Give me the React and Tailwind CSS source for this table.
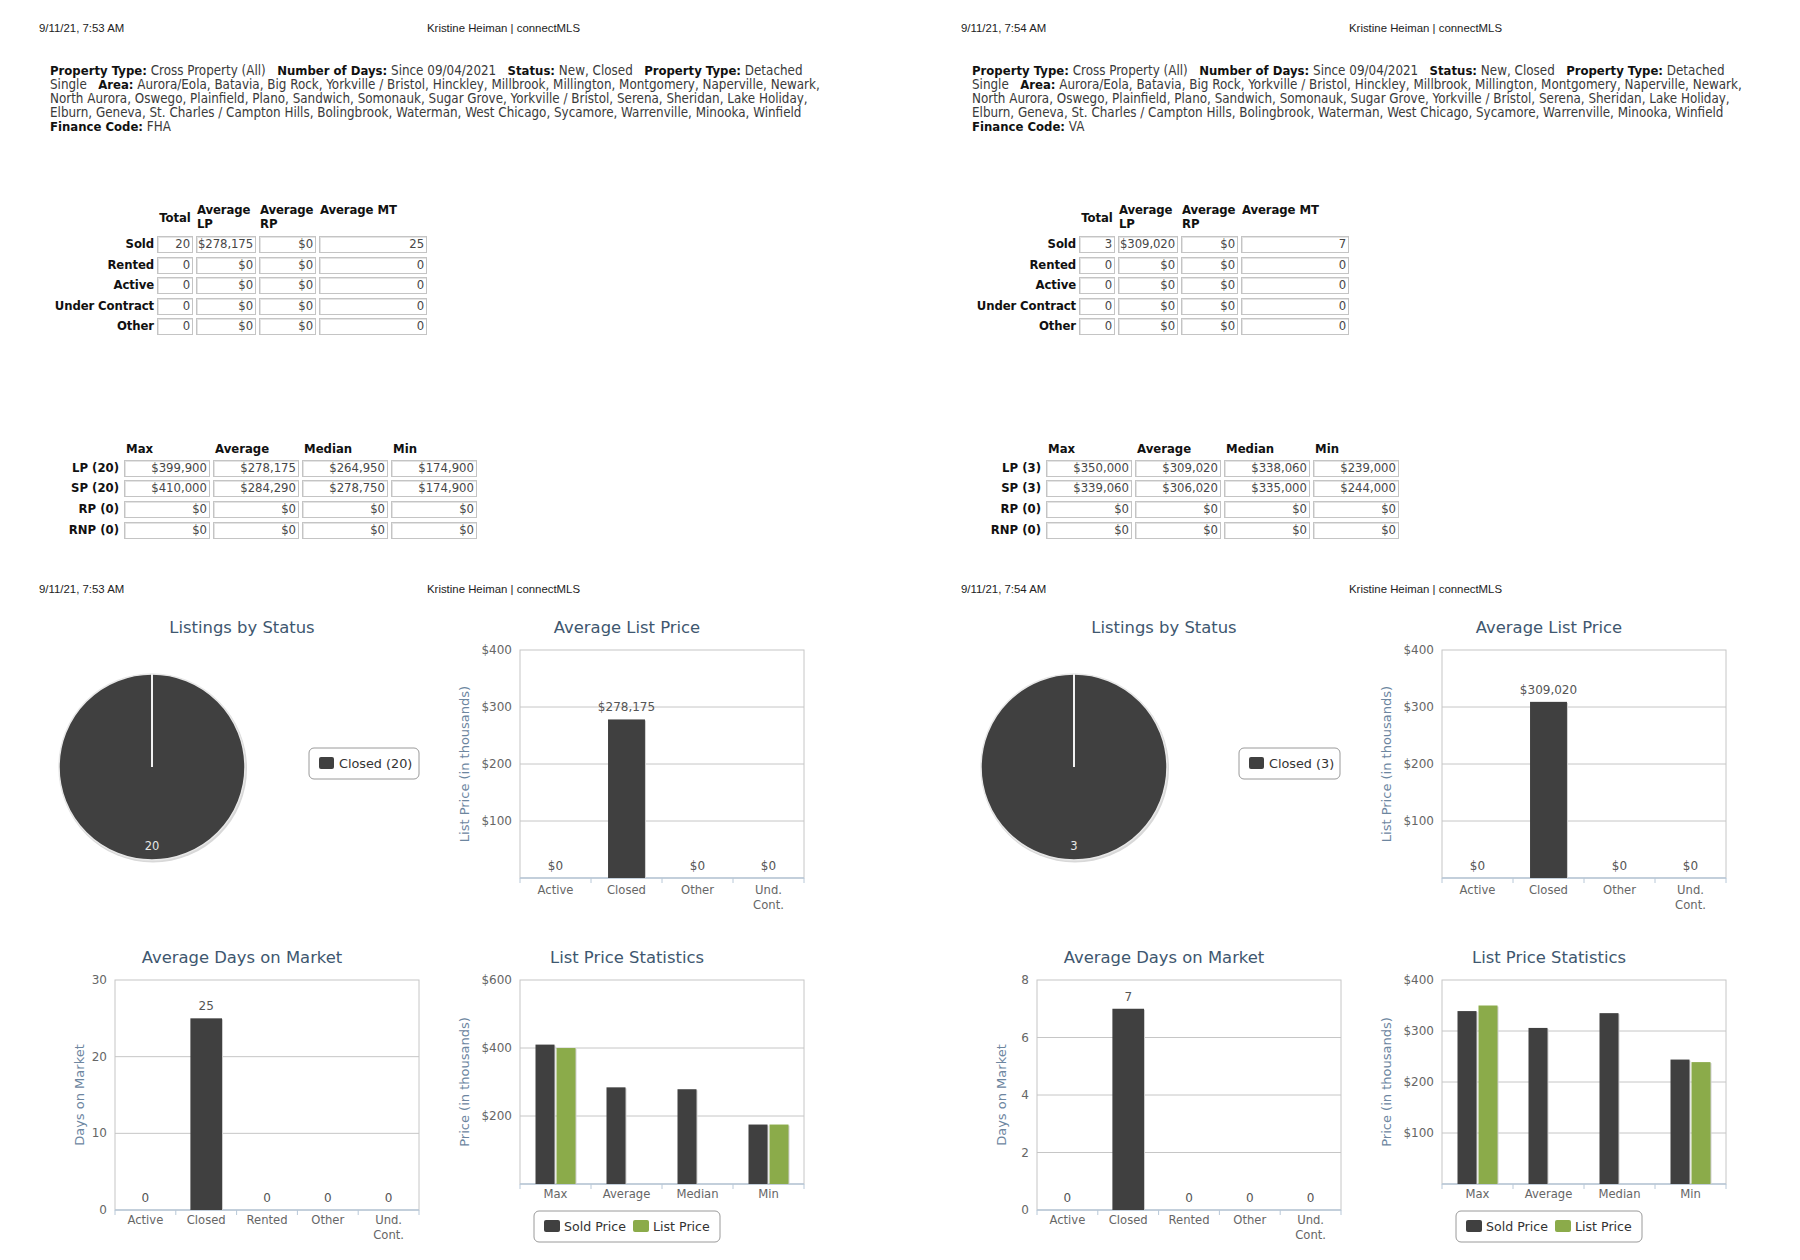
import React from 'react'

const pages = [
  {
    time: '9/11/21, 7:53 AM',
    finance: 'FHA',
    summary: [
      ['Sold', '20', '$278,175', '$0', '25'],
      ['Rented', '0', '$0', '$0', '0'],
      ['Active', '0', '$0', '$0', '0'],
      ['Under Contract', '0', '$0', '$0', '0'],
      ['Other', '0', '$0', '$0', '0'],
    ],
    stats: [
      ['LP (20)', '$399,900', '$278,175', '$264,950', '$174,900'],
      ['SP (20)', '$410,000', '$284,290', '$278,750', '$174,900'],
      ['RP (0)', '$0', '$0', '$0', '$0'],
      ['RNP (0)', '$0', '$0', '$0', '$0'],
    ],
    closed: 20,
    legendX: 269,
    legendW: 110,
    avgLp: 278.175,
    avgLpLabel: '$278,175',
    dom: { max: 30, ticks: [0, 10, 20, 30], value: 25 },
    lps: {
      max: 600,
      ticks: [200, 400, 600],
      sold: [410, 284.29, 278.75, 174.9],
      list: [399.9, null, null, 174.9],
    },
  },
  {
    time: '9/11/21, 7:54 AM',
    finance: 'VA',
    summary: [
      ['Sold', '3', '$309,020', '$0', '7'],
      ['Rented', '0', '$0', '$0', '0'],
      ['Active', '0', '$0', '$0', '0'],
      ['Under Contract', '0', '$0', '$0', '0'],
      ['Other', '0', '$0', '$0', '0'],
    ],
    stats: [
      ['LP (3)', '$350,000', '$309,020', '$338,060', '$239,000'],
      ['SP (3)', '$339,060', '$306,020', '$335,000', '$244,000'],
      ['RP (0)', '$0', '$0', '$0', '$0'],
      ['RNP (0)', '$0', '$0', '$0', '$0'],
    ],
    closed: 3,
    legendX: 277,
    legendW: 101,
    avgLp: 309.02,
    avgLpLabel: '$309,020',
    dom: { max: 8, ticks: [0, 2, 4, 6, 8], value: 7 },
    lps: {
      max: 400,
      ticks: [100, 200, 300, 400],
      sold: [339.06, 306.02, 335, 244],
      list: [350, null, null, 239],
    },
  },
]

const DARK = '#404040'
const GREEN = '#8bab4a'

function Header({ time }) {
  return (
    <div className="flex pl-[39px] h-[14px] leading-[14px] text-[11.4px] text-[#222] font-['Liberation_Sans',Arial,sans-serif]">
      <span className="w-[388px] shrink-0">{time}</span>
      <span>Kristine Heiman | connectMLS</span>
    </div>
  )
}

function Criteria({ finance }) {
  const b = 'font-bold text-[#111] font-["DejaVu_Sans",sans-serif] text-[11.7px]'
  return (
    <div className="mt-[29px] pl-[50px] whitespace-nowrap leading-[14.1px] text-[13.3px] text-[#3a3a3a] font-['DejaVu_Sans_Condensed','Liberation_Sans',sans-serif]">
      <div>
        <span className={b}>Property Type:</span> Cross Property (All)&nbsp;&nbsp;&nbsp;
        <span className={b}>Number of Days:</span> Since 09/04/2021&nbsp;&nbsp;&nbsp;
        <span className={b}>Status:</span> New, Closed&nbsp;&nbsp;&nbsp;
        <span className={b}>Property Type:</span> Detached
      </div>
      <div>
        Single&nbsp;&nbsp;&nbsp;<span className={b}>Area:</span> Aurora/Eola, Batavia, Big Rock, Yorkville / Bristol, Hinckley,
        Millbrook, Millington, Montgomery, Naperville, Newark,
      </div>
      <div>
        North Aurora, Oswego, Plainfield, Plano, Sandwich, Somonauk, Sugar Grove, Yorkville / Bristol, Serena, Sheridan,
        Lake Holiday,
      </div>
      <div>
        Elburn, Geneva, St. Charles / Campton Hills, Bolingbrook, Waterman, West Chicago, Sycamore, Warrenville, Minooka,
        Winfield
      </div>
      <div>
        <span className={b}>Finance Code:</span> {finance}
      </div>
    </div>
  )
}

function Cell({ w, children }) {
  return (
    <div
      className={`${w} h-[17px] shrink-0 border border-[#c4c4c4] shadow-[inset_1px_1px_0_#e4e4e4] flex items-center justify-end pr-[2px] text-[#474747]`}
    >
      {children}
    </div>
  )
}

function SummaryTable({ rows }) {
  const widths = ['w-[36px]', 'w-[60px]', 'w-[57px]', 'w-[108px]']
  return (
    <div className="mt-[68.5px] ml-[44px] flex flex-col gap-[3.4px] text-[11.7px] tracking-[-0.1px] font-['DejaVu_Sans',Verdana,sans-serif]">
      <div className="flex gap-[3px] h-[30px] leading-[14px] font-bold text-[#111]">
        <div className="w-[110px] shrink-0" />
        <div className="w-[36px] shrink-0 self-center text-center">Total</div>
        <div className="w-[60px] shrink-0 pl-[1px]">
          Average
          <br />
          LP
        </div>
        <div className="w-[57px] shrink-0 pl-[1px]">
          Average
          <br />
          RP
        </div>
        <div className="w-[108px] shrink-0 pl-[1px]">Average MT</div>
      </div>
      {rows.map((r) => (
        <div key={r[0]} className="flex gap-[3px] items-center h-[17px] leading-[17px]">
          <div className="w-[110px] shrink-0 text-right font-bold text-[#111]">{r[0]}</div>
          {r.slice(1).map((v, i) => (
            <Cell key={i} w={widths[i]}>
              {v}
            </Cell>
          ))}
        </div>
      ))}
    </div>
  )
}

function StatsTable({ rows }) {
  return (
    <div className="mt-[107px] ml-[44px] flex flex-col gap-[3.7px] text-[11.7px] font-['DejaVu_Sans',Verdana,sans-serif]">
      <div className="flex gap-[3px] h-[14px] leading-[14px] font-bold text-[#111]">
        <div className="w-[77px] shrink-0" />
        {['Max', 'Average', 'Median', 'Min'].map((h) => (
          <div key={h} className="w-[86px] shrink-0 pl-[2px]">
            {h}
          </div>
        ))}
      </div>
      {rows.map((r) => (
        <div key={r[0]} className="flex gap-[3px] items-center h-[17px] leading-[17px]">
          <div className="w-[77px] shrink-0 text-right pr-[2px] font-bold text-[#111]">{r[0]}</div>
          {r.slice(1).map((v, i) => (
            <Cell key={i} w="w-[86px]">
              {v}
            </Cell>
          ))}
        </div>
      ))}
    </div>
  )
}

function ChartTitle({ x, children }) {
  return (
    <text x={x} y={28} textAnchor="middle" fontSize="16.4" fill="#3e576f">
      {children}
    </text>
  )
}

function PieChart({ count, legendX, legendW }) {
  const cx = 112
  const cy = 162
  const r = 93
  return (
    <svg width="400" height="320" className="font-['DejaVu_Sans',sans-serif]">
      <ChartTitle x={202}>Listings by Status</ChartTitle>
      <circle cx={cx + 1} cy={cy + 1.5} r={r + 1} fill="#d8d8d8" />
      <circle cx={cx} cy={cy} r={r} fill={DARK} stroke="#e8e8e8" strokeWidth="1.5" />
      <line x1={cx} y1={cy - r} x2={cx} y2={cy} stroke="#f2f2f2" strokeWidth="2" />
      <text x={cx} y={cy + 83} textAnchor="middle" fontSize="11.5" fill="#e6e6e6">
        {count}
      </text>
      <rect x={legendX} y={143} width={legendW} height={31} rx="5" fill="white" stroke="#9a9a9a" />
      <rect x={legendX + 10} y={152} width={15} height={12} rx="2" fill={DARK} />
      <text x={legendX + 30} y={163} fontSize="12.8" fill="#333">
        Closed ({count})
      </text>
    </svg>
  )
}

function BarChart({ title, titleX, yTitle, yTitleX, plot, max, ticks, tickLabel, categories, series, single, valueLabel, labelY, legend }) {
  const { x, y, w, h } = plot
  const yAt = (v) => y + h - (v / max) * h
  const catW = w / categories.length
  return (
    <svg width="400" height="320" className="font-['DejaVu_Sans',sans-serif]">
      <ChartTitle x={titleX}>{title}</ChartTitle>
      {ticks.map((t) => (
        <g key={t}>
          {t !== 0 && t !== max && <line x1={x} x2={x + w} y1={yAt(t)} y2={yAt(t)} stroke="#c6c6c6" />}
          <text x={x - 8} y={yAt(t) + 4} textAnchor="end" fontSize="12" fill="#666">
            {tickLabel(t)}
          </text>
        </g>
      ))}
      <rect x={x} y={y} width={w} height={h} fill="none" stroke="#c6c6c6" />
      <line x1={x} x2={x + w} y1={y + h} y2={y + h} stroke="#b8c8d8" strokeWidth="1.5" />
      {categories.map((_, i) => (
        <line key={i} x1={x + i * catW} x2={x + i * catW} y1={y + h} y2={y + h + 5} stroke="#b8c8d8" />
      ))}
      <line x1={x + w} x2={x + w} y1={y + h} y2={y + h + 5} stroke="#b8c8d8" />
      <text
        transform={`translate(${yTitleX} ${y + h / 2}) rotate(-90)`}
        textAnchor="middle"
        fontSize="13"
        fill="#6d869f"
      >
        {yTitle}
      </text>
      {categories.map((c, i) => {
        const center = x + catW * i + catW / 2
        return (
          <g key={c.join(' ')}>
            {single
              ? (() => {
                  const v = series[0].values[i]
                  const bw = catW * 0.52
                  const top = yAt(v)
                  return (
                    <g>
                      {v > 0 && (
                        <g>
                          <rect x={center - bw / 2 + 1} y={top + 1} width={bw} height={y + h - top - 1} fill="#cfcfcf" />
                          <rect x={center - bw / 2} y={top} width={bw} height={y + h - top} fill={DARK} />
                        </g>
                      )}
                      <text x={center} y={top - 8} textAnchor="middle" fontSize="12" fill="#555">
                        {valueLabel(v)}
                      </text>
                    </g>
                  )
                })()
              : series.map((s, k) => {
                  const v = s.values[i]
                  if (v == null) return null
                  const top = yAt(v)
                  const bx = k === 0 ? center - 20 : center + 1
                  return (
                    <g key={k}>
                      <rect x={bx + 1} y={top + 1} width={19} height={y + h - top - 1} fill="#cfcfcf" />
                      <rect x={bx} y={top} width={19} height={y + h - top} fill={s.color} />
                    </g>
                  )
                })}
            {c.map((line, j) => (
              <text key={j} x={center} y={labelY + j * 14.5} textAnchor="middle" fontSize="11.6" fill="#666">
                {line}
              </text>
            ))}
          </g>
        )
      })}
      {legend && (
        <g>
          <rect x={94} y={276} width={186} height={31} rx="5" fill="white" stroke="#9a9a9a" />
          <rect x={104} y={285} width={16} height={12} rx="2" fill={DARK} />
          <text x={124} y={296} fontSize="12.6" fill="#333">
            Sold Price
          </text>
          <rect x={193} y={285} width={16} height={12} rx="2" fill={GREEN} />
          <text x={213} y={296} fontSize="12.6" fill="#333">
            List Price
          </text>
        </g>
      )}
    </svg>
  )
}

function Page({ data, className }) {
  return (
    <div className={`pt-[21px] ${className}`}>
      <Header time={data.time} />
      <Criteria finance={data.finance} />
      <SummaryTable rows={data.summary} />
      <StatsTable rows={data.stats} />
      <div className="mt-[43px]">
        <Header time={data.time} />
      </div>
      <div className="mt-[9px] pl-[40px] grid grid-cols-[400px_400px] gap-y-[10px]">
        <PieChart count={data.closed} legendX={data.legendX} legendW={data.legendW} />
        <BarChart
          title="Average List Price"
          titleX={187}
          yTitle="List Price (in thousands)"
          yTitleX={29}
          plot={{ x: 80, y: 45, w: 284, h: 228 }}
          max={400}
          ticks={[100, 200, 300, 400]}
          tickLabel={(t) => `$${t}`}
          categories={[['Active'], ['Closed'], ['Other'], ['Und.', 'Cont.']]}
          series={[{ values: [0, data.avgLp, 0, 0] }]}
          single
          valueLabel={(v) => (v > 0 ? data.avgLpLabel : '$0')}
          labelY={289}
        />
        <BarChart
          title="Average Days on Market"
          titleX={202}
          yTitle="Days on Market"
          yTitleX={44}
          plot={{ x: 75, y: 45, w: 304, h: 230 }}
          max={data.dom.max}
          ticks={data.dom.ticks}
          tickLabel={(t) => `${t}`}
          categories={[['Active'], ['Closed'], ['Rented'], ['Other'], ['Und.', 'Cont.']]}
          series={[{ values: [0, data.dom.value, 0, 0, 0] }]}
          single
          valueLabel={(v) => `${v}`}
          labelY={289}
        />
        <BarChart
          title="List Price Statistics"
          titleX={187}
          yTitle="Price (in thousands)"
          yTitleX={29}
          plot={{ x: 80, y: 45, w: 284, h: 204 }}
          max={data.lps.max}
          ticks={data.lps.ticks}
          tickLabel={(t) => `$${t}`}
          categories={[['Max'], ['Average'], ['Median'], ['Min']]}
          series={[
            { color: DARK, values: data.lps.sold },
            { color: GREEN, values: data.lps.list },
          ]}
          labelY={263}
          legend
        />
      </div>
    </div>
  )
}

export default function App() {
  return (
    <div className="w-[1800px] h-[1260px] bg-white flex overflow-hidden">
      <Page data={pages[0]} className="w-[922px] shrink-0" />
      <Page data={pages[1]} className="flex-1 min-w-0" />
    </div>
  )
}
